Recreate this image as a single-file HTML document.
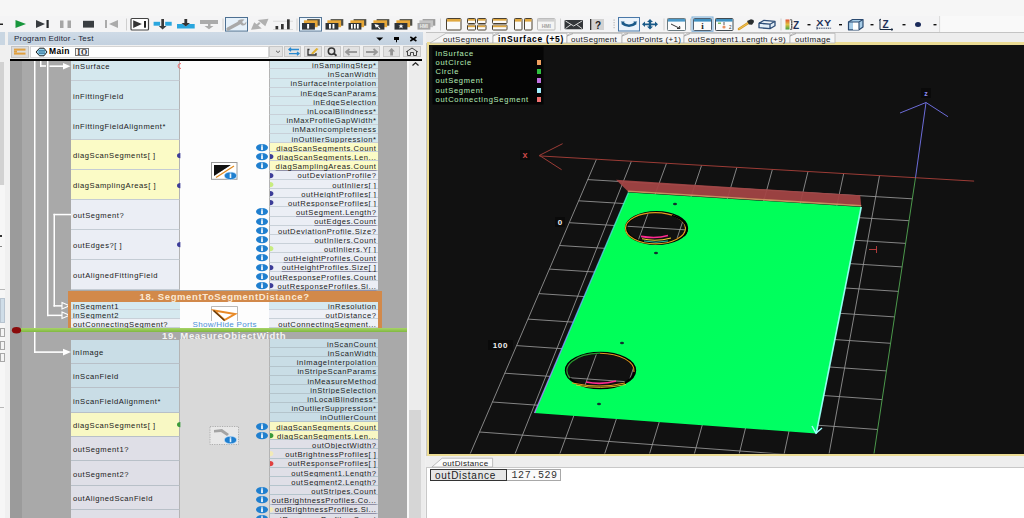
<!DOCTYPE html>
<html><head><meta charset="utf-8">
<style>
*{box-sizing:border-box;margin:0;padding:0}
html,body{width:1024px;height:518px;overflow:hidden;background:#f3f3f3;font-family:"Liberation Sans",sans-serif;font-size:8px;color:#222}
.a{position:absolute}
.t{position:absolute;white-space:nowrap;line-height:9px;letter-spacing:0.3px}
.p{font-size:7.6px;letter-spacing:0.55px;color:#1a1a1a}
.u{text-decoration:underline;text-decoration-color:#9090a8;text-decoration-thickness:0.6px;text-underline-offset:1px}
.rr{text-align:right}
svg{position:absolute;overflow:visible}
</style></head><body>

<div class="a" style="left:0px;top:0px;width:1024px;height:32px;background:#f6f6f6"></div>
<div class="a" style="left:941px;top:16px;width:83px;height:16px;background:#f9f9f9"></div>
<div class="a" style="left:0px;top:16px;width:940px;height:16px;background:#f4f4f5;border-right:1px solid #dcdcdc"></div>
<svg style="left:0;top:0" width="1024" height="34" viewBox="0 0 1024 34">
<rect x="0" y="23.5" width="3" height="1.5" fill="#222"/>
<path d="M15.5,20 L26,24 L15.5,28 Z" fill="#17963c"/>
<path d="M36,20 L45,24 L36,28 Z" fill="#383c40"/><rect x="46.5" y="20" width="2.2" height="8" fill="#25282b"/>
<rect x="60" y="20.5" width="3.5" height="7.5" fill="#a6a6a6"/><rect x="67.5" y="20.5" width="3.5" height="7.5" fill="#a6a6a6"/>
<rect x="83" y="20.8" width="11" height="6.8" fill="#3a3e42"/>
<rect x="105" y="20" width="2" height="8" fill="#ababab"/><path d="M118,20 L109,24 L118,28 Z" fill="#ababab"/>
<rect x="126" y="18.5" width="1" height="12" fill="#cfcfcf"/>
<rect x="131" y="18.5" width="17.5" height="11.5" rx="1" fill="#fff" stroke="#444" stroke-width="1.2"/>
<path d="M133.2,20.3 L141.9,24.1 L133.2,27.9 Z" fill="#353535"/><rect x="144" y="21" width="2" height="6.7" fill="#222"/>
<rect x="153.6" y="21.8" width="6.5" height="3.9" fill="#2aa6de"/><rect x="165.2" y="21.8" width="6.5" height="3.9" fill="#2aa6de"/>
<rect x="161.3" y="19" width="2.7" height="7.5" fill="#3a3a3a"/><path d="M158.8,26 L166.5,26 L162.6,29.6 Z" fill="#3a3a3a"/>
<path d="M177,24 L183,24 L185.8,26.5 L188.6,24 L194.7,24 L194.7,28.6 L177,28.6 Z" fill="#2aa6de"/>
<rect x="184.4" y="19" width="2.8" height="4.5" fill="#333"/><path d="M181.5,23 L190,23 L185.8,26.4 Z" fill="#333"/>
<rect x="200" y="20" width="18" height="4" fill="#ababab"/><rect x="208" y="23.5" width="2.5" height="3" fill="#ababab"/><path d="M204.5,26 L213.5,26 L209,29.2 Z" fill="#ababab"/>
<rect x="222.5" y="18.5" width="1" height="12" fill="#cfcfcf"/>
<rect x="225.5" y="17.5" width="22" height="13.6" fill="#e6f1fa" stroke="#4d7092" stroke-width="1"/>
<path d="M228,29 L240,22.5" stroke="#a9a9a9" stroke-width="3.2" stroke-linecap="round"/><path d="M237.5,21 Q240,18.5 244.5,19.5 L242,22 L244,24 L246.5,21.5 Q246.5,26 242,25.5 Z" fill="#a9a9a9"/>
<path d="M251,29.8 L254.2,22.2 L261.8,28.6 Z M268.5,18.8 L265.3,26.2 L257.7,20 Z" fill="#b0b0b0"/><path d="M256.5,25.8 L259.8,22.8" stroke="#b0b0b0" stroke-width="2"/>
<rect x="273" y="20.8" width="20" height="0.7" fill="#d0d0d0"/><rect x="273" y="29.3" width="20" height="0.7" fill="#d0d0d0"/>
<rect x="275.5" y="26" width="2.7" height="3.3" fill="#333"/><rect x="281" y="24" width="2.7" height="5.3" fill="#333"/><rect x="287" y="19.3" width="2.7" height="10" fill="#333"/>
<rect x="296.5" y="18.5" width="1" height="12" fill="#cfcfcf"/>
<rect x="299.5" y="17.5" width="22" height="13.6" fill="#ecf5fc" stroke="#557696" stroke-width="1"/>
<rect x="307.1" y="19.1" width="12.7" height="6.6" fill="#4e4e48"/>
<rect x="303.9" y="20.3" width="13.7" height="6.9" fill="#e8a838"/>
<rect x="302" y="23" width="12.9" height="6.6" fill="#303438"/>
<rect x="307.1" y="24" width="2" height="4.6" fill="#fff"/>
<rect x="330.6" y="19.1" width="12.7" height="6.6" fill="#4e4e48"/>
<rect x="327.4" y="20.3" width="13.7" height="6.9" fill="#e8a838"/>
<rect x="325.5" y="23" width="12.9" height="6.6" fill="#303438"/>
<rect x="329.0" y="24" width="1.9" height="4.6" fill="#fff"/><rect x="332.5" y="24" width="1.9" height="4.6" fill="#fff"/>
<rect x="353.6" y="19.1" width="12.7" height="6.6" fill="#4e4e48"/>
<rect x="350.4" y="20.3" width="13.7" height="6.9" fill="#e8a838"/>
<rect x="348.5" y="23" width="12.9" height="6.6" fill="#303438"/>
<rect x="351.0" y="24" width="1.7" height="4.6" fill="#fff"/>
<rect x="354.0" y="24" width="1.7" height="4.6" fill="#fff"/>
<rect x="357.0" y="24" width="1.7" height="4.6" fill="#fff"/>
<rect x="376.6" y="19.1" width="12.7" height="6.6" fill="#4e4e48"/>
<rect x="373.4" y="20.3" width="13.7" height="6.9" fill="#e8a838"/>
<rect x="371.5" y="23" width="12.9" height="6.6" fill="#303438"/>
<path d="M374.5,24 L379.5,25.3 L377.8,26 L380.5,28.6 L379.5,29.2 L377.0,26.6 L376.0,28 Z" fill="#fff"/>
<rect x="399.6" y="19.1" width="12.7" height="6.6" fill="#4e4e48"/>
<rect x="396.4" y="20.3" width="13.7" height="6.9" fill="#e8a838"/>
<rect x="394.5" y="23" width="12.9" height="6.6" fill="#303438"/>
<path d="M401.0,24 L401.8,25.6 L403.5,25.6 L402.1,26.6 L402.8,28.4 L401.0,27.3 L399.2,28.4 L399.9,26.6 L398.5,25.6 L400.2,25.6 Z" fill="#fff"/>
<rect x="422.6" y="19.1" width="12.7" height="6.6" fill="#9a9a9a"/>
<rect x="419.4" y="20.3" width="13.7" height="6.9" fill="#c4c4c4"/>
<rect x="417.5" y="23" width="12.9" height="6.6" fill="#a6a6a6"/>
<text x="423.9" y="28.3" font-size="4.5" fill="#eee" text-anchor="middle" font-family="Liberation Sans" font-weight="bold">HMI</text>
<rect x="440" y="18.5" width="1" height="12" fill="#cfcfcf"/>
<rect x="446.5" y="18.5" width="14.5" height="11.5" rx="0.8" fill="#fafafa" stroke="#4a4030" stroke-width="1"/>
<rect x="447.0" y="19.0" width="13.5" height="2.6" fill="#e0a840"/>
<rect x="467.5" y="18.5" width="8" height="5" rx="0.8" fill="#fafafa" stroke="#4a4030" stroke-width="1"/>
<rect x="468.0" y="19.0" width="7" height="1.7" fill="#e0a840"/>
<rect x="477.5" y="18.5" width="8.5" height="5" rx="0.8" fill="#fafafa" stroke="#4a4030" stroke-width="1"/>
<rect x="478.0" y="19.0" width="7.5" height="1.7" fill="#e0a840"/>
<rect x="467.5" y="25" width="8" height="5" rx="0.8" fill="#fafafa" stroke="#4a4030" stroke-width="1"/>
<rect x="468.0" y="25.5" width="7" height="1.7" fill="#e0a840"/>
<rect x="477.5" y="25" width="8.5" height="5" rx="0.8" fill="#fafafa" stroke="#4a4030" stroke-width="1"/>
<rect x="478.0" y="25.5" width="7.5" height="1.7" fill="#e0a840"/>
<rect x="492.5" y="18.5" width="14.5" height="5" rx="0.8" fill="#fafafa" stroke="#4a4030" stroke-width="1"/>
<rect x="493.0" y="19.0" width="13.5" height="1.7" fill="#e0a840"/>
<rect x="492.5" y="25" width="14.5" height="5" rx="0.8" fill="#fafafa" stroke="#4a4030" stroke-width="1"/>
<rect x="493.0" y="25.5" width="13.5" height="1.7" fill="#e0a840"/>
<rect x="514.5" y="18.5" width="7.5" height="11.5" rx="0.8" fill="#fafafa" stroke="#4a4030" stroke-width="1"/>
<rect x="515.0" y="19.0" width="6.5" height="2.6" fill="#e0a840"/>
<rect x="524.5" y="18.5" width="7.5" height="11.5" rx="0.8" fill="#fafafa" stroke="#4a4030" stroke-width="1"/>
<rect x="525.0" y="19.0" width="6.5" height="2.6" fill="#e0a840"/>
<rect x="537.5" y="18.5" width="17.5" height="11.5" rx="0.8" fill="#f4f4f4" stroke="#bdbdbd" stroke-width="1"/>
<rect x="538.0" y="19.0" width="16.5" height="2.6" fill="#cfcfcf"/>
<text x="546.3" y="28.3" font-size="5" fill="#a0a0a0" text-anchor="middle" font-family="Liberation Sans" font-weight="bold">HMI</text>
<rect x="560" y="18.5" width="1" height="12" fill="#cfcfcf"/>
<rect x="564.5" y="20" width="18.5" height="9.2" rx="1" fill="#333639"/><path d="M565.5,21 L573.7,26 L582,21 M565.5,28.5 L571,24.5 M582,28.5 L576.5,24.5" stroke="#e8e8e8" stroke-width="0.9" fill="none"/>
<rect x="590" y="19" width="14" height="11" fill="#d2d2d2"/><rect x="590" y="19" width="1.3" height="11" fill="#333"/><text x="598" y="28.8" font-size="10" fill="#222" text-anchor="middle" font-family="Liberation Sans" font-weight="bold">?</text>
<rect x="613.5" y="19.5" width="1.2" height="1.2" fill="#b8b8b8"/>
<rect x="613.5" y="22" width="1.2" height="1.2" fill="#b8b8b8"/>
<rect x="613.5" y="24.5" width="1.2" height="1.2" fill="#b8b8b8"/>
<rect x="613.5" y="27" width="1.2" height="1.2" fill="#b8b8b8"/>
<rect x="618.5" y="17.5" width="21" height="13.5" fill="#eaf3fb" stroke="#4a78a8" stroke-width="1"/>
<path d="M622,23 Q629,28.5 636,23" stroke="#1a5a8a" stroke-width="2.6" fill="none"/><path d="M620.8,21.5 L624.5,21.5 L623.5,25.5 Z M637.2,21.5 L633.5,21.5 L634.5,25.5 Z" fill="#1a5a8a"/>
<path d="M650,19 L653,22 L651.2,22 L651.2,23.4 L655,23.4 L655,21.6 L658,24.3 L655,27 L655,25.2 L651.2,25.2 L651.2,26.6 L653,26.6 L650,29.6 L647,26.6 L648.8,26.6 L648.8,25.2 L645,25.2 L645,27 L642,24.3 L645,21.6 L645,23.4 L648.8,23.4 L648.8,22 L647,22 Z" fill="#1a5a88"/>
<rect x="663.5" y="18.5" width="1" height="12" fill="#cfcfcf"/>
<rect x="667.5" y="18.5" width="18" height="12" rx="0.8" fill="#fbfbfb" stroke="#6a7a80" stroke-width="1"/>
<rect x="668.0" y="19.0" width="17" height="2.6" fill="#4a98c8"/>
<path d="M671,24 L680,28.5 M680,28.5 L677,28.5 M680,28.5 L679.5,26" stroke="#333" stroke-width="1" fill="none"/>
<rect x="690" y="18.5" width="1" height="12" fill="#cfcfcf"/>
<rect x="692" y="17" width="21" height="14.3" fill="#dfeefa" stroke="#7fb0d8" stroke-width="1"/>
<rect x="693.5" y="18.5" width="18" height="12" rx="0.8" fill="#fbfbfb" stroke="#506070" stroke-width="1"/>
<rect x="694.0" y="19.0" width="17" height="2.6" fill="#3e90c0"/>
<text x="702.5" y="29" font-size="9" fill="#222" text-anchor="middle" font-family="Liberation Serif" font-weight="bold">i</text>
<rect x="715.5" y="18.5" width="17.5" height="12" rx="0.8" fill="#fbfbfb" stroke="#404a50" stroke-width="1"/>
<rect x="716.0" y="19.0" width="16.5" height="2.6" fill="#3e90c0"/>
<rect x="718" y="22.5" width="3" height="1.5" fill="#7ac060"/><circle cx="724" cy="27" r="1.6" fill="#e89060"/><rect x="723.6" y="22" width="0.8" height="3" fill="#333"/><text x="729" y="29" font-size="4.5" fill="#333" font-family="Liberation Sans">2</text>
<path d="M739,29 L749,22.5" stroke="#d89a28" stroke-width="2.6" stroke-linecap="round"/><path d="M739,29 L749,22.5" stroke="#f0d060" stroke-width="0.8"/><path d="M747,21 L751,19.3 L753.5,20 L754,22 L752,24.8 L749,24.5 Z" fill="#2a2e30"/>
<path d="M759,23.2 L764,20.3 L775,21.3 L775,25.7 L770,28.7 L759,27.7 Z M759,23.2 L770,24.2 L775,21.3 M770,24.2 L770,28.7" stroke="#2e4e78" stroke-width="1.3" fill="#e2eef8" stroke-linejoin="round"/>
<rect x="780.5" y="18.5" width="1" height="12" fill="#cfcfcf"/>
<defs><linearGradient id="zb" x1="0" y1="0" x2="0" y2="1"><stop offset="0" stop-color="#e05030"/><stop offset="0.5" stop-color="#e0c040"/><stop offset="1" stop-color="#40a040"/></linearGradient></defs>
<rect x="785.5" y="19.5" width="4" height="10" fill="url(#zb)"/><path d="M790,19.8 L791.8,19.8 L791.8,29.3 L790,29.3 M791,22 L792.3,22 M791,24.5 L792.3,24.5 M791,27 L792.3,27" stroke="#333" stroke-width="0.8" fill="none"/>
<text x="793" y="28.5" font-size="10" fill="#1e3058" font-family="Liberation Sans" font-weight="bold">Z</text>
<rect x="807.5" y="24" width="3" height="1.4" fill="#111"/>
<text x="816.3" y="25.6" font-size="8.6" fill="#1e3058" font-family="Liberation Sans" font-weight="bold" letter-spacing="0.3" textLength="15.2" lengthAdjust="spacingAndGlyphs">XY</text><path d="M817,28.2 L831.5,28.2" stroke="#1e3058" stroke-width="0.9" stroke-dasharray="1.2,0.6"/><rect x="816.5" y="26.5" width="0.9" height="3" fill="#253a60"/>
<rect x="839" y="24" width="3" height="1.4" fill="#111"/>
<path d="M848.5,22 L852.5,19.5 L863,19.5 L863,27 L859,29.8 L848.5,29.8 Z" fill="#a8cde8" stroke="#2a4a70" stroke-width="1.2" stroke-linejoin="round"/><path d="M853,22 L859,22 L859,29.8 L853,29.8 Z" fill="#fff"/><path d="M848.5,22 L859,22 L863,19.5 M859,22 L859,29.8" stroke="#2a4a70" stroke-width="1.1" fill="none"/>
<rect x="870.5" y="24" width="3" height="1.4" fill="#111"/>
<path d="M880,19.5 L880,29.5 L892.5,29.5 M879,20.5 L881,19 M891.5,28.5 L893,29.5 L891.5,30.5" stroke="#1a2a40" stroke-width="1" fill="none"/><text x="882.5" y="28" font-size="10" fill="#1e3058" font-family="Liberation Sans" font-weight="bold">Z</text>
<rect x="902.5" y="24" width="3" height="1.4" fill="#111"/>
<ellipse cx="918" cy="24.6" rx="3" ry="2.5" fill="#1a2a5a"/>
<rect x="933.5" y="24" width="3" height="1.4" fill="#111"/>
</svg>
<div class="a" style="left:0px;top:32px;width:427px;height:486px;background:#f0f0f0"></div>
<div class="a" style="left:0px;top:32px;width:5px;height:13px;background:#c9d6e2"></div>
<div class="a" style="left:0px;top:62px;width:4px;height:123px;background:#d2d2d2"></div>
<div class="a" style="left:0px;top:185px;width:5px;height:333px;background:#f6f6f6"></div>
<div class="a" style="left:0px;top:289px;width:5px;height:1px;background:#b8b8b8"></div>
<div class="a" style="left:0px;top:407px;width:4px;height:1px;background:#b8b8b8"></div>
<div class="a" style="left:0px;top:235px;width:1.5px;height:1.5px;background:#333"></div>
<div class="a" style="left:0px;top:246px;width:1.5px;height:1px;background:#888"></div>
<div class="a" style="left:0px;top:298px;width:5px;height:25px;background:#cfdde8;border:1px solid #b8c4d0"></div>
<div class="a" style="left:0px;top:328px;width:5px;height:9px;background:#f4f4f4;border:1px solid #a8a8a8"></div>
<div class="a" style="left:0px;top:341px;width:5px;height:9px;background:#f4f4f4;border:1px solid #a8a8a8"></div>
<div class="a" style="left:0px;top:353px;width:5px;height:9px;background:#f4f4f4;border:1px solid #a8a8a8"></div>
<div class="a" style="left:8px;top:32px;width:415px;height:13px;background:linear-gradient(#cfdbe7,#c3d1df)"></div>
<div class="t" style="left:14px;top:34px;color:#1c2636;font-size:8px;letter-spacing:0.2px">Program Editor - Test</div>
<div class="a" style="left:11px;top:46px;width:18px;height:12px;background:#dcdcdc;border:1px solid #c4c4c4"></div>
<div class="a" style="left:30px;top:46px;width:239px;height:12px;background:#fff;border:1px solid #d4d4d4"></div>
<div class="t" style="left:49px;top:47px;color:#000;font-size:8.5px;letter-spacing:0.4px"><b>Main</b></div>
<div class="a" style="left:75px;top:48px;width:13.5px;height:8px;border:1px solid #777;background:#f4f4f4"></div>
<div class="t" style="left:77.3px;top:47.5px;color:#333;font-size:8px;letter-spacing:0.6px;font-family:&#39;Liberation Serif&#39;,serif"><b>IO</b></div>
<svg style="left:0;top:0" width="1024" height="62" viewBox="0 0 1024 62">
<path d="M376.2,37.6 L383.2,37.6 L379.7,40.8 Z" fill="#000"/>
<path d="M394,37 L399,37 L399,40 L397,40 L397,42.3 L396,42.3 L396,40 L394,40 Z M395,37.5 L395,39.5" fill="#000"/>
<path d="M410.3,37 L416.4,41 M416.4,37 L410.3,41" stroke="#000" stroke-width="1.5"/>
</svg>
<div class="a" style="left:269px;top:46px;width:14px;height:11px;background:#e2e2e2;border:1px solid #c8c8c8"></div>
<div class="a" style="left:284px;top:46px;width:17px;height:11px;background:#e2e2e2;border:1px solid #c8c8c8"></div>
<div class="a" style="left:304px;top:46px;width:18px;height:11px;background:#e2e2e2;border:1px solid #c8c8c8"></div>
<div class="a" style="left:324px;top:46px;width:17px;height:11px;background:#e2e2e2;border:1px solid #c8c8c8"></div>
<div class="a" style="left:343px;top:46px;width:17px;height:11px;background:#e2e2e2;border:1px solid #c8c8c8"></div>
<div class="a" style="left:363px;top:46px;width:17px;height:11px;background:#e2e2e2;border:1px solid #c8c8c8"></div>
<div class="a" style="left:383px;top:46px;width:17px;height:11px;background:#e2e2e2;border:1px solid #c8c8c8"></div>
<div class="a" style="left:403px;top:46px;width:18px;height:11px;background:#e2e2e2;border:1px solid #c8c8c8"></div>
<div class="a" style="left:10px;top:59px;width:412px;height:2px;background:#000"></div>
<svg style="left:0;top:0" width="1024" height="62" viewBox="0 0 1024 62">
<rect x="14" y="48.6" width="11.5" height="2" fill="#e0a040"/><rect x="14" y="52.6" width="11.5" height="2" fill="#e0a040"/><rect x="14" y="50.6" width="3" height="2" fill="#e0a040"/>
<path d="M36,52 L39.5,48.2 L44,48.2 L47,52 L44,55.8 L39.5,55.8 Z" fill="#9fd8f0" stroke="#222" stroke-width="1"/><rect x="38.5" y="50.3" width="6.5" height="1.2" fill="#2a6a90"/><rect x="38.5" y="52.5" width="6.5" height="1.2" fill="#2a6a90"/>
<path d="M276,50.8 L278,52.6 L280,50.8" stroke="#555" stroke-width="0.9" fill="none"/>
<path d="M289,49.5 L299,49.5 M291,47.8 L289,49.5 L291,51.2" stroke="#2a8ad0" stroke-width="1.3" fill="none"/><path d="M289,53.6 L299,53.6 M297,51.9 L299,53.6 L297,55.3" stroke="#2a8ad0" stroke-width="1.3" fill="none"/>
<path d="M309.5,49.5 L308,49.5 L308,55 L316,55 L316,53" stroke="#333" stroke-width="1.3" fill="none"/><path d="M311,53.5 L316.5,48 L318.5,49 L313,54.3 Z" fill="#e0b030"/>
<circle cx="331.5" cy="51.2" r="3.2" stroke="#333" stroke-width="1.5" fill="none"/><path d="M334,53.5 L336.5,55.7" stroke="#333" stroke-width="1.8"/>
<path d="M346,52 L357,52 M349.5,49 L346,52 L349.5,55" stroke="#999" stroke-width="1.8" fill="none"/>
<path d="M366,52 L377,52 M373.5,49 L377,52 L373.5,55" stroke="#999" stroke-width="1.8" fill="none"/>
<path d="M391.6,48 L395,51.5 L393,51.5 L393,55.5 L390.2,55.5 L390.2,51.5 L388.2,51.5 Z" fill="#959595"/>
<path d="M406,52 L412,48 L418,52 M407.5,51 L407.5,55.5 L410.5,55.5 L410.5,52.5 L413.5,52.5 L413.5,55.5 L416.5,55.5 L416.5,51" stroke="#333" stroke-width="0.9" fill="none"/>
</svg>
<div class="a" style="left:10px;top:61px;width:397px;height:457px;background:#a9a9a9"></div>
<div class="a" style="left:10px;top:61px;width:12px;height:457px;background:#9b9b9b"></div>
<div class="a" style="left:407px;top:61px;width:2px;height:457px;background:#f8f8f8"></div>
<div class="a" style="left:409px;top:61px;width:16px;height:457px;background:#ececec"></div>
<div class="a" style="left:409px;top:410px;width:12px;height:108px;background:#d6d6d6"></div>
<svg style="left:409px;top:60px" width="14" height="8" viewBox="0 0 14 8"><path d="M3.5,5.5 L6.5,2.8 L9.5,5.5" stroke="#222" stroke-width="1.2" fill="none"/></svg>
<svg style="left:0;top:0" width="1024" height="518" viewBox="0 0 1024 518">
<g fill="#ffffff">
<rect x="34" y="61" width="1.5" height="292"/><rect x="34" y="351.3" width="30" height="1.6"/><path d="M63,348.8 L71,352.1 L63,355.4 Z"/>
<rect x="47" y="61" width="1.5" height="255.2"/><rect x="47" y="314.6" width="15" height="1.5"/>
<rect x="53.5" y="213.8" width="1.5" height="92.8"/><rect x="53.5" y="213.8" width="17.5" height="1.5"/><rect x="53.5" y="305.1" width="8.5" height="1.5"/>
<rect x="40" y="61" width="1.5" height="5.8"/><rect x="40" y="65.2" width="6" height="1.6"/>
<rect x="49.5" y="65.4" width="14" height="1.6"/><path d="M63,63 L70.5,66.2 L63,69.4 Z"/>
</g>
<path d="M62,302.6 L69.5,305.8 L62,309 Z M62,312.1 L69.5,315.3 L62,318.5 Z" fill="none" stroke="#fff" stroke-width="1.1"/>
</svg>
<div class="a" style="left:70.5px;top:61px;width:1.5px;height:229px;background:#8e8e8e"></div>
<div class="a" style="left:71px;top:61px;width:109px;height:19.5px;background:#d5e8ee;border-bottom:1px solid #c4ccd4;border-right:1px solid #b4b4b4"></div>
<div class="t p" style="left:73px;top:61.75px">inSurface</div>
<div class="a" style="left:71px;top:80.5px;width:109px;height:29.9px;background:#d5e8ee;border-bottom:1px solid #c4ccd4;border-right:1px solid #b4b4b4"></div>
<div class="t p" style="left:73px;top:91.65px">inFittingField</div>
<div class="a" style="left:71px;top:110.4px;width:109px;height:29.9px;background:#d5e8ee;border-bottom:1px solid #c4ccd4;border-right:1px solid #b4b4b4"></div>
<div class="t p" style="left:73px;top:121.55px">inFittingFieldAlignment*</div>
<div class="a" style="left:71px;top:140.3px;width:109px;height:29.9px;background:#fbfbc6;border-bottom:1px solid #c4ccd4;border-right:1px solid #b4b4b4"></div>
<div class="t p" style="left:73px;top:151.45px">diagScanSegments[ ]</div>
<div class="a" style="left:71px;top:170.2px;width:109px;height:29.9px;background:#fbfbc6;border-bottom:1px solid #c4ccd4;border-right:1px solid #b4b4b4"></div>
<div class="t p" style="left:73px;top:181.35px">diagSamplingAreas[ ]</div>
<div class="a" style="left:71px;top:200.1px;width:109px;height:29.9px;background:#ebeef5;border-bottom:1px solid #c4ccd4;border-right:1px solid #b4b4b4"></div>
<div class="t p" style="left:73px;top:211.25px">outSegment?</div>
<div class="a" style="left:71px;top:230.0px;width:109px;height:29.9px;background:#ebeef5;border-bottom:1px solid #c4ccd4;border-right:1px solid #b4b4b4"></div>
<div class="t p" style="left:73px;top:241.15px">outEdges?[ ]</div>
<div class="a" style="left:71px;top:259.9px;width:109px;height:29.9px;background:#ebeef5;border-bottom:1px solid #c4ccd4;border-right:1px solid #b4b4b4"></div>
<div class="t p" style="left:73px;top:271.05px">outAlignedFittingField</div>
<div class="a" style="left:180px;top:61px;width:89px;height:229px;background:#fdfdfd"></div>
<div class="a" style="left:269px;top:61px;width:109px;height:8.4px;background:#d5e8ee;border-bottom:1px solid #c8d0d8;border-left:1px solid #b4b4b4"></div>
<div class="t rr p" style="top:61.0px;width:106.5px;left:270px">inSamplingStep*</div>
<div class="a" style="left:269px;top:69.4px;width:109px;height:9.2px;background:#d5e8ee;border-bottom:1px solid #c8d0d8;border-left:1px solid #b4b4b4"></div>
<div class="t rr p" style="top:70.2px;width:106.5px;left:270px">inScanWidth</div>
<div class="a" style="left:269px;top:78.6px;width:109px;height:9.2px;background:#d5e8ee;border-bottom:1px solid #c8d0d8;border-left:1px solid #b4b4b4"></div>
<div class="t rr p" style="top:79.4px;width:106.5px;left:270px">inSurfaceInterpolation</div>
<div class="a" style="left:269px;top:87.8px;width:109px;height:9.2px;background:#d5e8ee;border-bottom:1px solid #c8d0d8;border-left:1px solid #b4b4b4"></div>
<div class="t rr p" style="top:88.6px;width:106.5px;left:270px">inEdgeScanParams</div>
<div class="a" style="left:269px;top:97.0px;width:109px;height:9.2px;background:#d5e8ee;border-bottom:1px solid #c8d0d8;border-left:1px solid #b4b4b4"></div>
<div class="t rr p" style="top:97.8px;width:106.5px;left:270px">inEdgeSelection</div>
<div class="a" style="left:269px;top:106.2px;width:109px;height:9.2px;background:#d5e8ee;border-bottom:1px solid #c8d0d8;border-left:1px solid #b4b4b4"></div>
<div class="t rr p" style="top:107.0px;width:106.5px;left:270px">inLocalBlindness*</div>
<div class="a" style="left:269px;top:115.4px;width:109px;height:9.2px;background:#d5e8ee;border-bottom:1px solid #c8d0d8;border-left:1px solid #b4b4b4"></div>
<div class="t rr p" style="top:116.2px;width:106.5px;left:270px">inMaxProfileGapWidth*</div>
<div class="a" style="left:269px;top:124.6px;width:109px;height:9.2px;background:#d5e8ee;border-bottom:1px solid #c8d0d8;border-left:1px solid #b4b4b4"></div>
<div class="t rr p" style="top:125.4px;width:106.5px;left:270px">inMaxIncompleteness</div>
<div class="a" style="left:269px;top:133.8px;width:109px;height:9.2px;background:#d5e8ee;border-bottom:1px solid #c8d0d8;border-left:1px solid #b4b4b4"></div>
<div class="t rr p" style="top:134.6px;width:106.5px;left:270px">inOutlierSuppression*</div>
<div class="a" style="left:269px;top:143.0px;width:109px;height:9.2px;background:#fbfbc6;border-bottom:1px solid #c8d0d8;border-left:1px solid #b4b4b4"></div>
<div class="t rr p u" style="top:143.8px;width:106.5px;left:270px">diagScanSegments.Count</div>
<div class="a" style="left:269px;top:152.2px;width:109px;height:9.2px;background:#fbfbc6;border-bottom:1px solid #c8d0d8;border-left:1px solid #b4b4b4"></div>
<div class="t rr p u" style="top:153.0px;width:106.5px;left:270px">diagScanSegments.Len...</div>
<div class="a" style="left:269px;top:161.4px;width:109px;height:9.2px;background:#fbfbc6;border-bottom:1px solid #c8d0d8;border-left:1px solid #b4b4b4"></div>
<div class="t rr p u" style="top:162.2px;width:106.5px;left:270px">diagSamplingAreas.Count</div>
<div class="a" style="left:269px;top:170.6px;width:109px;height:9.2px;background:#ebeef5;border-bottom:1px solid #c8d0d8;border-left:1px solid #b4b4b4"></div>
<div class="t rr p" style="top:171.4px;width:106.5px;left:270px">outDeviationProfile?</div>
<div class="a" style="left:269px;top:179.8px;width:109px;height:9.2px;background:#ebeef5;border-bottom:1px solid #c8d0d8;border-left:1px solid #b4b4b4"></div>
<div class="t rr p" style="top:180.6px;width:106.5px;left:270px">outInliers[ ]</div>
<div class="a" style="left:269px;top:189.0px;width:109px;height:9.2px;background:#ebeef5;border-bottom:1px solid #c8d0d8;border-left:1px solid #b4b4b4"></div>
<div class="t rr p" style="top:189.8px;width:106.5px;left:270px">outHeightProfiles[ ]</div>
<div class="a" style="left:269px;top:198.2px;width:109px;height:9.2px;background:#ebeef5;border-bottom:1px solid #c8d0d8;border-left:1px solid #b4b4b4"></div>
<div class="t rr p" style="top:199.0px;width:106.5px;left:270px">outResponseProfiles[ ]</div>
<div class="a" style="left:269px;top:207.4px;width:109px;height:9.2px;background:#ebeef5;border-bottom:1px solid #c8d0d8;border-left:1px solid #b4b4b4"></div>
<div class="t rr p u" style="top:208.2px;width:106.5px;left:270px">outSegment.Length?</div>
<div class="a" style="left:269px;top:216.6px;width:109px;height:9.2px;background:#ebeef5;border-bottom:1px solid #c8d0d8;border-left:1px solid #b4b4b4"></div>
<div class="t rr p u" style="top:217.4px;width:106.5px;left:270px">outEdges.Count</div>
<div class="a" style="left:269px;top:225.8px;width:109px;height:9.2px;background:#ebeef5;border-bottom:1px solid #c8d0d8;border-left:1px solid #b4b4b4"></div>
<div class="t rr p u" style="top:226.6px;width:106.5px;left:270px">outDeviationProfile.Size?</div>
<div class="a" style="left:269px;top:235.0px;width:109px;height:9.2px;background:#ebeef5;border-bottom:1px solid #c8d0d8;border-left:1px solid #b4b4b4"></div>
<div class="t rr p u" style="top:235.8px;width:106.5px;left:270px">outInliers.Count</div>
<div class="a" style="left:269px;top:244.2px;width:109px;height:9.2px;background:#ebeef5;border-bottom:1px solid #c8d0d8;border-left:1px solid #b4b4b4"></div>
<div class="t rr p u" style="top:245.0px;width:106.5px;left:270px">outInliers.Y[ ]</div>
<div class="a" style="left:269px;top:253.4px;width:109px;height:9.2px;background:#ebeef5;border-bottom:1px solid #c8d0d8;border-left:1px solid #b4b4b4"></div>
<div class="t rr p u" style="top:254.2px;width:106.5px;left:270px">outHeightProfiles.Count</div>
<div class="a" style="left:269px;top:262.6px;width:109px;height:9.2px;background:#ebeef5;border-bottom:1px solid #c8d0d8;border-left:1px solid #b4b4b4"></div>
<div class="t rr p u" style="top:263.4px;width:106.5px;left:270px">outHeightProfiles.Size[ ]</div>
<div class="a" style="left:269px;top:271.8px;width:109px;height:9.2px;background:#ebeef5;border-bottom:1px solid #c8d0d8;border-left:1px solid #b4b4b4"></div>
<div class="t rr p u" style="top:272.6px;width:106.5px;left:270px">outResponseProfiles.Count</div>
<div class="a" style="left:269px;top:281.0px;width:109px;height:9.2px;background:#ebeef5;border-bottom:1px solid #c8d0d8;border-left:1px solid #b4b4b4"></div>
<div class="t rr p u" style="top:281.8px;width:106.5px;left:270px">outResponseProfiles.Si...</div>
<div class="a" style="left:68px;top:291px;width:314px;height:38px;background:#d2894a"></div>
<div class="t" style="left:139.5px;top:292px;color:#fbe8d2;font-size:9.5px;letter-spacing:0.61px"><b>18. SegmentToSegmentDistance?</b></div>
<div class="a" style="left:71px;top:301.6px;width:109px;height:8.85px;background:#d6e9ef;border-bottom:1px solid #c8d0d8"></div>
<div class="t p" style="left:73px;top:302.2px">inSegment1</div>
<div class="a" style="left:71px;top:310.45px;width:109px;height:8.85px;background:#d6e9ef;border-bottom:1px solid #c8d0d8"></div>
<div class="t p" style="left:73px;top:311.05px">inSegment2</div>
<div class="a" style="left:71px;top:319.3px;width:109px;height:8.85px;background:#eef0f6;border-bottom:1px solid #c8d0d8"></div>
<div class="t p" style="left:73px;top:319.9px">outConnectingSegment?</div>
<div class="a" style="left:180px;top:301.6px;width:89px;height:26.5px;background:#fdfdfd"></div>
<div class="a" style="left:269px;top:301.6px;width:109px;height:8.85px;background:#d6e9ef;border-bottom:1px solid #c8d0d8"></div>
<div class="t rr p" style="top:302.2px;left:270px;width:106.5px">inResolution</div>
<div class="a" style="left:269px;top:310.45px;width:109px;height:8.85px;background:#eef0f6;border-bottom:1px solid #c8d0d8"></div>
<div class="t rr p" style="top:311.05px;left:270px;width:106.5px">outDistance?</div>
<div class="a" style="left:269px;top:319.3px;width:109px;height:8.85px;background:#eef0f6;border-bottom:1px solid #c8d0d8"></div>
<div class="t rr p" style="top:319.9px;left:270px;width:106.5px">outConnectingSegment...</div>
<div class="t" style="left:192.5px;top:319.8px;color:#4a90d8;letter-spacing:0.32px;-webkit-text-stroke:0">Show/Hide Ports</div>
<div class="a" style="left:21px;top:328px;width:386px;height:4px;background:linear-gradient(#a8d468,#80b840)"></div>
<div class="t" style="left:162px;top:331px;color:#f4f4f4;font-size:9.5px;letter-spacing:0.63px"><b>19. MeasureObjectWidth</b></div>
<div class="a" style="left:71px;top:339.5px;width:109px;height:24.35px;background:#c9dde6;border-bottom:1px solid #b8c0c8;border-right:1px solid #b4b4b4"></div>
<div class="t p" style="left:73px;top:347.88px">inImage</div>
<div class="a" style="left:71px;top:363.85px;width:109px;height:24.35px;background:#c9dde6;border-bottom:1px solid #b8c0c8;border-right:1px solid #b4b4b4"></div>
<div class="t p" style="left:73px;top:372.23px">inScanField</div>
<div class="a" style="left:71px;top:388.2px;width:109px;height:24.35px;background:#c9dde6;border-bottom:1px solid #b8c0c8;border-right:1px solid #b4b4b4"></div>
<div class="t p" style="left:73px;top:396.57px">inScanFieldAlignment*</div>
<div class="a" style="left:71px;top:412.55px;width:109px;height:24.35px;background:#f8f8c4;border-bottom:1px solid #b8c0c8;border-right:1px solid #b4b4b4"></div>
<div class="t p" style="left:73px;top:420.93px">diagScanSegments[ ]</div>
<div class="a" style="left:71px;top:436.9px;width:109px;height:24.35px;background:#dfdfe7;border-bottom:1px solid #b8c0c8;border-right:1px solid #b4b4b4"></div>
<div class="t p" style="left:73px;top:445.27px">outSegment1?</div>
<div class="a" style="left:71px;top:461.25px;width:109px;height:24.35px;background:#dfdfe7;border-bottom:1px solid #b8c0c8;border-right:1px solid #b4b4b4"></div>
<div class="t p" style="left:73px;top:469.62px">outSegment2?</div>
<div class="a" style="left:71px;top:485.6px;width:109px;height:24.35px;background:#dfdfe7;border-bottom:1px solid #b8c0c8;border-right:1px solid #b4b4b4"></div>
<div class="t p" style="left:73px;top:493.98px">outAlignedScanField</div>
<div class="a" style="left:71px;top:509.95px;width:109px;height:24.35px;background:#dfdfe7;border-bottom:1px solid #b8c0c8;border-right:1px solid #b4b4b4"></div>
<div class="a" style="left:180px;top:339px;width:89px;height:179px;background:#d9d9d9"></div>
<div class="a" style="left:269px;top:339.0px;width:109px;height:9.2px;background:#c9dde6;border-bottom:1px solid #b4c4cc;border-left:1px solid #b4b4b4"></div>
<div class="t rr p" style="top:339.8px;width:106.5px;left:270px">inScanCount</div>
<div class="a" style="left:269px;top:348.2px;width:109px;height:9.2px;background:#c9dde6;border-bottom:1px solid #b4c4cc;border-left:1px solid #b4b4b4"></div>
<div class="t rr p" style="top:349.0px;width:106.5px;left:270px">inScanWidth</div>
<div class="a" style="left:269px;top:357.4px;width:109px;height:9.2px;background:#c9dde6;border-bottom:1px solid #b4c4cc;border-left:1px solid #b4b4b4"></div>
<div class="t rr p" style="top:358.2px;width:106.5px;left:270px">inImageInterpolation</div>
<div class="a" style="left:269px;top:366.6px;width:109px;height:9.2px;background:#c9dde6;border-bottom:1px solid #b4c4cc;border-left:1px solid #b4b4b4"></div>
<div class="t rr p" style="top:367.4px;width:106.5px;left:270px">inStripeScanParams</div>
<div class="a" style="left:269px;top:375.8px;width:109px;height:9.2px;background:#c9dde6;border-bottom:1px solid #b4c4cc;border-left:1px solid #b4b4b4"></div>
<div class="t rr p" style="top:376.6px;width:106.5px;left:270px">inMeasureMethod</div>
<div class="a" style="left:269px;top:385.0px;width:109px;height:9.2px;background:#c9dde6;border-bottom:1px solid #b4c4cc;border-left:1px solid #b4b4b4"></div>
<div class="t rr p" style="top:385.8px;width:106.5px;left:270px">inStripeSelection</div>
<div class="a" style="left:269px;top:394.2px;width:109px;height:9.2px;background:#c9dde6;border-bottom:1px solid #b4c4cc;border-left:1px solid #b4b4b4"></div>
<div class="t rr p" style="top:395.0px;width:106.5px;left:270px">inLocalBlindness*</div>
<div class="a" style="left:269px;top:403.4px;width:109px;height:9.2px;background:#c9dde6;border-bottom:1px solid #b4c4cc;border-left:1px solid #b4b4b4"></div>
<div class="t rr p" style="top:404.2px;width:106.5px;left:270px">inOutlierSuppression*</div>
<div class="a" style="left:269px;top:412.6px;width:109px;height:9.2px;background:#c9dde6;border-bottom:1px solid #b4c4cc;border-left:1px solid #b4b4b4"></div>
<div class="t rr p" style="top:413.4px;width:106.5px;left:270px">inOutlierCount</div>
<div class="a" style="left:269px;top:421.8px;width:109px;height:9.2px;background:#f8f8c4;border-bottom:1px solid #b4c4cc;border-left:1px solid #b4b4b4"></div>
<div class="t rr p u" style="top:422.6px;width:106.5px;left:270px">diagScanSegments.Count</div>
<div class="a" style="left:269px;top:431.0px;width:109px;height:9.2px;background:#f8f8c4;border-bottom:1px solid #b4c4cc;border-left:1px solid #b4b4b4"></div>
<div class="t rr p u" style="top:431.8px;width:106.5px;left:270px">diagScanSegments.Len...</div>
<div class="a" style="left:269px;top:440.2px;width:109px;height:9.2px;background:#dfdfe7;border-bottom:1px solid #b4c4cc;border-left:1px solid #b4b4b4"></div>
<div class="t rr p" style="top:441.0px;width:106.5px;left:270px">outObjectWidth?</div>
<div class="a" style="left:269px;top:449.4px;width:109px;height:9.2px;background:#dfdfe7;border-bottom:1px solid #b4c4cc;border-left:1px solid #b4b4b4"></div>
<div class="t rr p" style="top:450.2px;width:106.5px;left:270px">outBrightnessProfiles[ ]</div>
<div class="a" style="left:269px;top:458.6px;width:109px;height:9.2px;background:#dfdfe7;border-bottom:1px solid #b4c4cc;border-left:1px solid #b4b4b4"></div>
<div class="t rr p" style="top:459.4px;width:106.5px;left:270px">outResponseProfiles[ ]</div>
<div class="a" style="left:269px;top:467.8px;width:109px;height:9.2px;background:#dfdfe7;border-bottom:1px solid #b4c4cc;border-left:1px solid #b4b4b4"></div>
<div class="t rr p" style="top:468.6px;width:106.5px;left:270px">outSegment1.Length?</div>
<div class="a" style="left:269px;top:477.0px;width:109px;height:9.2px;background:#dfdfe7;border-bottom:1px solid #b4c4cc;border-left:1px solid #b4b4b4"></div>
<div class="t rr p" style="top:477.8px;width:106.5px;left:270px">outSegment2.Length?</div>
<div class="a" style="left:269px;top:486.2px;width:109px;height:9.2px;background:#dfdfe7;border-bottom:1px solid #b4c4cc;border-left:1px solid #b4b4b4"></div>
<div class="t rr p u" style="top:487.0px;width:106.5px;left:270px">outStripes.Count</div>
<div class="a" style="left:269px;top:495.4px;width:109px;height:9.2px;background:#dfdfe7;border-bottom:1px solid #b4c4cc;border-left:1px solid #b4b4b4"></div>
<div class="t rr p u" style="top:496.2px;width:106.5px;left:270px">outBrightnessProfiles.Co...</div>
<div class="a" style="left:269px;top:504.6px;width:109px;height:9.2px;background:#dfdfe7;border-bottom:1px solid #b4c4cc;border-left:1px solid #b4b4b4"></div>
<div class="t rr p u" style="top:505.4px;width:106.5px;left:270px">outBrightnessProfiles.Si...</div>
<div class="a" style="left:269px;top:513.8px;width:109px;height:9.2px;background:#dfdfe7;border-bottom:1px solid #b4c4cc;border-left:1px solid #b4b4b4"></div>
<div class="t rr p u" style="top:514.6px;width:106.5px;left:270px">outResponseProfiles.Count</div>
<svg style="left:256px;top:144.0px" width="12" height="7.2" viewBox="0 0 12 7.2"><ellipse cx="6" cy="3.6" rx="6" ry="3.6" fill="#1f7fcf"/><rect x="5.15" y="2.2" width="1.7" height="3.9" fill="#ffffff"/><rect x="5.15" y="0.7" width="1.7" height="1" fill="#ffffff"/></svg>
<svg style="left:256px;top:153.2px" width="12" height="7.2" viewBox="0 0 12 7.2"><ellipse cx="6" cy="3.6" rx="6" ry="3.6" fill="#1f7fcf"/><rect x="5.15" y="2.2" width="1.7" height="3.9" fill="#ffffff"/><rect x="5.15" y="0.7" width="1.7" height="1" fill="#ffffff"/></svg>
<svg style="left:256px;top:162.39999999999998px" width="12" height="7.2" viewBox="0 0 12 7.2"><ellipse cx="6" cy="3.6" rx="6" ry="3.6" fill="#1f7fcf"/><rect x="5.15" y="2.2" width="1.7" height="3.9" fill="#ffffff"/><rect x="5.15" y="0.7" width="1.7" height="1" fill="#ffffff"/></svg>
<svg style="left:256px;top:208.39999999999998px" width="12" height="7.2" viewBox="0 0 12 7.2"><ellipse cx="6" cy="3.6" rx="6" ry="3.6" fill="#1f7fcf"/><rect x="5.15" y="2.2" width="1.7" height="3.9" fill="#ffffff"/><rect x="5.15" y="0.7" width="1.7" height="1" fill="#ffffff"/></svg>
<svg style="left:256px;top:217.6px" width="12" height="7.2" viewBox="0 0 12 7.2"><ellipse cx="6" cy="3.6" rx="6" ry="3.6" fill="#1f7fcf"/><rect x="5.15" y="2.2" width="1.7" height="3.9" fill="#ffffff"/><rect x="5.15" y="0.7" width="1.7" height="1" fill="#ffffff"/></svg>
<svg style="left:256px;top:226.79999999999998px" width="12" height="7.2" viewBox="0 0 12 7.2"><ellipse cx="6" cy="3.6" rx="6" ry="3.6" fill="#1f7fcf"/><rect x="5.15" y="2.2" width="1.7" height="3.9" fill="#ffffff"/><rect x="5.15" y="0.7" width="1.7" height="1" fill="#ffffff"/></svg>
<svg style="left:256px;top:236.0px" width="12" height="7.2" viewBox="0 0 12 7.2"><ellipse cx="6" cy="3.6" rx="6" ry="3.6" fill="#1f7fcf"/><rect x="5.15" y="2.2" width="1.7" height="3.9" fill="#ffffff"/><rect x="5.15" y="0.7" width="1.7" height="1" fill="#ffffff"/></svg>
<svg style="left:256px;top:245.2px" width="12" height="7.2" viewBox="0 0 12 7.2"><ellipse cx="6" cy="3.6" rx="6" ry="3.6" fill="#1f7fcf"/><rect x="5.15" y="2.2" width="1.7" height="3.9" fill="#ffffff"/><rect x="5.15" y="0.7" width="1.7" height="1" fill="#ffffff"/></svg>
<svg style="left:256px;top:254.4px" width="12" height="7.2" viewBox="0 0 12 7.2"><ellipse cx="6" cy="3.6" rx="6" ry="3.6" fill="#1f7fcf"/><rect x="5.15" y="2.2" width="1.7" height="3.9" fill="#ffffff"/><rect x="5.15" y="0.7" width="1.7" height="1" fill="#ffffff"/></svg>
<svg style="left:256px;top:263.6px" width="12" height="7.2" viewBox="0 0 12 7.2"><ellipse cx="6" cy="3.6" rx="6" ry="3.6" fill="#1f7fcf"/><rect x="5.15" y="2.2" width="1.7" height="3.9" fill="#ffffff"/><rect x="5.15" y="0.7" width="1.7" height="1" fill="#ffffff"/></svg>
<svg style="left:256px;top:272.79999999999995px" width="12" height="7.2" viewBox="0 0 12 7.2"><ellipse cx="6" cy="3.6" rx="6" ry="3.6" fill="#1f7fcf"/><rect x="5.15" y="2.2" width="1.7" height="3.9" fill="#ffffff"/><rect x="5.15" y="0.7" width="1.7" height="1" fill="#ffffff"/></svg>
<svg style="left:256px;top:282.0px" width="12" height="7.2" viewBox="0 0 12 7.2"><ellipse cx="6" cy="3.6" rx="6" ry="3.6" fill="#1f7fcf"/><rect x="5.15" y="2.2" width="1.7" height="3.9" fill="#ffffff"/><rect x="5.15" y="0.7" width="1.7" height="1" fill="#ffffff"/></svg>
<svg style="left:269.5px;top:154.2px" width="3.4" height="5.2" viewBox="0 0 3.4 5.2"><path d="M0 0 A3.4 2.6 0 0 1 0 5.2 Z" fill="#3c3c98"/></svg>
<svg style="left:269.5px;top:172.6px" width="3.4" height="5.2" viewBox="0 0 3.4 5.2"><path d="M0 0 A3.4 2.6 0 0 1 0 5.2 Z" fill="#3c3c98"/></svg>
<svg style="left:269.5px;top:181.79999999999998px" width="3.4" height="5.2" viewBox="0 0 3.4 5.2"><path d="M0 0 A3.4 2.6 0 0 1 0 5.2 Z" fill="#c8ec80"/></svg>
<svg style="left:269.5px;top:191.0px" width="3.4" height="5.2" viewBox="0 0 3.4 5.2"><path d="M0 0 A3.4 2.6 0 0 1 0 5.2 Z" fill="#3c3c98"/></svg>
<svg style="left:269.5px;top:200.2px" width="3.4" height="5.2" viewBox="0 0 3.4 5.2"><path d="M0 0 A3.4 2.6 0 0 1 0 5.2 Z" fill="#3c3c98"/></svg>
<svg style="left:269.5px;top:246.2px" width="3.4" height="5.2" viewBox="0 0 3.4 5.2"><path d="M0 0 A3.4 2.6 0 0 1 0 5.2 Z" fill="#c8ec80"/></svg>
<svg style="left:269.5px;top:264.6px" width="3.4" height="5.2" viewBox="0 0 3.4 5.2"><path d="M0 0 A3.4 2.6 0 0 1 0 5.2 Z" fill="#3c3c98"/></svg>
<svg style="left:269.5px;top:283.0px" width="3.4" height="5.2" viewBox="0 0 3.4 5.2"><path d="M0 0 A3.4 2.6 0 0 1 0 5.2 Z" fill="#3c3c98"/></svg>
<svg style="left:176.6px;top:152.64999999999998px" width="3.4" height="5.2" viewBox="0 0 3.4 5.2"><path d="M3.4 0 A3.4 2.6 0 0 0 3.4 5.2 Z" fill="#3c3c98"/></svg>
<svg style="left:176.6px;top:182.54999999999998px" width="3.4" height="5.2" viewBox="0 0 3.4 5.2"><path d="M3.4 0 A3.4 2.6 0 0 0 3.4 5.2 Z" fill="#3c3c98"/></svg>
<svg style="left:176.6px;top:242.34999999999997px" width="3.4" height="5.2" viewBox="0 0 3.4 5.2"><path d="M3.4 0 A3.4 2.6 0 0 0 3.4 5.2 Z" fill="#3c3c98"/></svg>
<svg style="left:176px;top:63px" width="5" height="6" viewBox="0 0 5 6"><path d="M5,0.5 A3,2.5 0 0 0 5,5.5" stroke="#f07070" stroke-width="1" fill="none"/></svg>
<svg style="left:256px;top:422.8px" width="12" height="7.2" viewBox="0 0 12 7.2"><ellipse cx="6" cy="3.6" rx="6" ry="3.6" fill="#1f7fcf"/><rect x="5.15" y="2.2" width="1.7" height="3.9" fill="#ffffff"/><rect x="5.15" y="0.7" width="1.7" height="1" fill="#ffffff"/></svg>
<svg style="left:256px;top:432.0px" width="12" height="7.2" viewBox="0 0 12 7.2"><ellipse cx="6" cy="3.6" rx="6" ry="3.6" fill="#1f7fcf"/><rect x="5.15" y="2.2" width="1.7" height="3.9" fill="#ffffff"/><rect x="5.15" y="0.7" width="1.7" height="1" fill="#ffffff"/></svg>
<svg style="left:256px;top:487.2px" width="12" height="7.2" viewBox="0 0 12 7.2"><ellipse cx="6" cy="3.6" rx="6" ry="3.6" fill="#1f7fcf"/><rect x="5.15" y="2.2" width="1.7" height="3.9" fill="#ffffff"/><rect x="5.15" y="0.7" width="1.7" height="1" fill="#ffffff"/></svg>
<svg style="left:256px;top:496.4px" width="12" height="7.2" viewBox="0 0 12 7.2"><ellipse cx="6" cy="3.6" rx="6" ry="3.6" fill="#1f7fcf"/><rect x="5.15" y="2.2" width="1.7" height="3.9" fill="#ffffff"/><rect x="5.15" y="0.7" width="1.7" height="1" fill="#ffffff"/></svg>
<svg style="left:256px;top:505.6px" width="12" height="7.2" viewBox="0 0 12 7.2"><ellipse cx="6" cy="3.6" rx="6" ry="3.6" fill="#1f7fcf"/><rect x="5.15" y="2.2" width="1.7" height="3.9" fill="#ffffff"/><rect x="5.15" y="0.7" width="1.7" height="1" fill="#ffffff"/></svg>
<svg style="left:256px;top:514.8px" width="12" height="7.2" viewBox="0 0 12 7.2"><ellipse cx="6" cy="3.6" rx="6" ry="3.6" fill="#1f7fcf"/><rect x="5.15" y="2.2" width="1.7" height="3.9" fill="#ffffff"/><rect x="5.15" y="0.7" width="1.7" height="1" fill="#ffffff"/></svg>
<svg style="left:269.5px;top:433.0px" width="3.4" height="5.2" viewBox="0 0 3.4 5.2"><path d="M0 0 A3.4 2.6 0 0 1 0 5.2 Z" fill="#3a9a3a"/></svg>
<svg style="left:269.5px;top:451.4px" width="3.4" height="5.2" viewBox="0 0 3.4 5.2"><path d="M0 0 A3.4 2.6 0 0 1 0 5.2 Z" fill="#f2eab8"/></svg>
<svg style="left:269.5px;top:460.6px" width="3.4" height="5.2" viewBox="0 0 3.4 5.2"><path d="M0 0 A3.4 2.6 0 0 1 0 5.2 Z" fill="#e04040"/></svg>
<svg style="left:269.5px;top:506.6px" width="3.4" height="5.2" viewBox="0 0 3.4 5.2"><path d="M0 0 A3.4 2.6 0 0 1 0 5.2 Z" fill="#f2eab8"/></svg>
<svg style="left:176.6px;top:422.125px" width="3.4" height="5.2" viewBox="0 0 3.4 5.2"><path d="M3.4 0 A3.4 2.6 0 0 0 3.4 5.2 Z" fill="#3a9a3a"/></svg>
<svg style="left:0;top:0" width="1024" height="518" viewBox="0 0 1024 518"><rect x="211.5" y="162.5" width="25.5" height="16.8" fill="#fff" stroke="#9a9a9a" stroke-width="1"/><path d="M214,176 L214,165 L231,165 Z" fill="#111"/><path d="M216,177.5 L234,166" stroke="#e08a20" stroke-width="1.3"/><path d="M215,176.5 L233,164.5" stroke="#ffffff" stroke-width="0.8"/><ellipse cx="230.5" cy="175.8" rx="6.2" ry="3.8" fill="#1f7fcf" stroke="#cfe8ff" stroke-width="0.6"/><rect x="229.7" y="174" width="1.6" height="4" fill="#e6f4ff"/><rect x="229.7" y="172.6" width="1.6" height="0.9" fill="#e6f4ff"/><path d="M211.5,321 L211.5,306.5 L237.5,306.5 L237.5,321" fill="#fff" stroke="#a8a8a8" stroke-width="0.8"/><path d="M214,310.5 L235,314 L224.5,320 Z" fill="none" stroke="#e88a28" stroke-width="2" stroke-linejoin="miter"/><path d="M213.5,310.5 L224.5,320.5" stroke="#5a3810" stroke-width="1.3"/><rect x="210" y="426.5" width="28.5" height="18" fill="#e8e8e8" stroke="#a8a8a8" stroke-width="0.9" stroke-dasharray="1.2,1.2"/><path d="M214,430 L222,429 L229,434 L227,436 L221,432 L214,432.5 Z" fill="#a4a4a4"/><ellipse cx="230.5" cy="440" rx="6.2" ry="3.8" fill="#1f7fcf" stroke="#cfe8ff" stroke-width="0.6"/><rect x="229.7" y="438.2" width="1.6" height="4" fill="#e6f4ff"/><rect x="229.7" y="436.8" width="1.6" height="0.9" fill="#e6f4ff"/></svg>
<svg style="left:0;top:0" width="30" height="518" viewBox="0 0 30 518"><ellipse cx="16.5" cy="330.3" rx="4.6" ry="3.2" fill="#8a0a0a"/></svg>
<div class="a" style="left:426px;top:32px;width:598px;height:486px;background:#fff;border-left:1px solid #c8c8c8"></div>
<div class="a" style="left:426px;top:32px;width:598px;height:11px;background:#ededed;border-top:1px solid #c4c4c4"></div>
<div class="a" style="left:427px;top:42px;width:597px;height:414px;background:#ecdc94"></div>
<div class="a" style="left:429px;top:45px;width:595px;height:408.5px;background:#111"></div>
<div class="a" style="left:426px;top:456px;width:598px;height:12px;background:#eeeeee;border-bottom:1px solid #c8c8c8"></div>
<svg style="left:0;top:0" width="1024" height="518" viewBox="0 0 1024 518">
<path d="M430,43 L446,33.3 L493,33.3 L493,43 Z" fill="#f6f6f6" stroke="#b4b4b4" stroke-width="0.8"/>
<path d="M493,43 L493,36 L496,33.3 L567,33.3 L567,43 Z" fill="#fbfbfb" stroke="#b4b4b4" stroke-width="0.8"/>
<path d="M493,36 L499,33.6" stroke="#909090" stroke-width="0.7"/>
<path d="M567,43 L567,36 L570,33.3 L622,33.3 L622,43 Z" fill="#f6f6f6" stroke="#b4b4b4" stroke-width="0.8"/>
<path d="M567,36 L573,33.6" stroke="#909090" stroke-width="0.7"/>
<path d="M622,43 L622,36 L625,33.3 L684,33.3 L684,43 Z" fill="#f6f6f6" stroke="#b4b4b4" stroke-width="0.8"/>
<path d="M622,36 L628,33.6" stroke="#909090" stroke-width="0.7"/>
<path d="M684,43 L684,36 L687,33.3 L790,33.3 L790,43 Z" fill="#f6f6f6" stroke="#b4b4b4" stroke-width="0.8"/>
<path d="M684,36 L690,33.6" stroke="#909090" stroke-width="0.7"/>
<path d="M790,43 L790,36 L793,33.3 L835,33.3 L835,43 Z" fill="#f6f6f6" stroke="#b4b4b4" stroke-width="0.8"/>
<path d="M790,36 L796,33.6" stroke="#909090" stroke-width="0.7"/>
</svg>
<div class="t" style="left:443px;top:34.5px;color:#202020;letter-spacing:0.3px">outSegment</div>
<div class="t" style="left:498px;top:34.5px;color:#000;font-size:8.5px;letter-spacing:0.68px"><b>inSurface (+5)</b></div>
<div class="t" style="left:571px;top:34.5px;color:#202020;letter-spacing:0.3px">outSegment</div>
<div class="t" style="left:627px;top:34.5px;color:#202020;letter-spacing:0.3px">outPoints (+1)</div>
<div class="t" style="left:688px;top:34.5px;color:#202020;letter-spacing:0.3px">outSegment1.Length (+9)</div>
<div class="t" style="left:795px;top:34.5px;color:#202020;letter-spacing:0.3px">outImage</div>
<svg style="left:0;top:0" width="1024" height="518" viewBox="0 0 1024 518">
<path d="M431.9,467 L442.1,458.2 L492.6,458.2 L492.6,467 Z" fill="#fbfbfb" stroke="#b0b0b0" stroke-width="0.8"/>
</svg>
<div class="t" style="left:442.5px;top:459px;color:#202020;letter-spacing:0.34px">outDistance</div>
<div class="a" style="left:430px;top:469px;width:77px;height:12px;background:#e6e6e6;border:1px solid #333;border-right-width:1.5px"></div>
<div class="a" style="left:506.5px;top:469px;width:54.5px;height:12px;background:#fafafa;border:1px solid #a8a8a8;border-left:none"></div>
<div class="t" style="left:435px;top:470.5px;color:#222;font-size:10px;letter-spacing:0.75px;line-height:10px">outDistance</div>
<div class="t" style="left:511.5px;top:470.5px;color:#333;font-size:10px;letter-spacing:0.6px;line-height:10px;font-family:&#39;Liberation Mono&#39;,monospace">127.529</div>
<svg style="left:0;top:0" width="1024" height="518" viewBox="0 0 1024 518">
<defs><clipPath id="vc"><rect x="429" y="45" width="595" height="408.5"/></clipPath></defs>
<g clip-path="url(#vc)">
<rect x="432.5" y="46.5" width="111" height="58" fill="#050505"/>
<path d="M596.5,159.2 L437.4,530.3 M631.4,161.2 L483.2,533.9 M666.5,163.3 L529.1,537.5 M701.6,165.3 L575.3,541.1 M736.9,167.3 L621.8,544.8 M772.4,169.4 L668.4,548.4 M808.0,171.5 L715.3,552.1 M843.7,173.5 L762.5,555.8 M879.5,175.6 L809.9,559.5 M587.7,179.6 L912.3,198.8 M578.7,200.8 L909.0,220.7 M569.3,222.7 L905.6,243.4 M559.5,245.5 L902.1,266.9 M549.4,269.1 L898.4,291.4 M538.9,293.6 L894.6,316.9 M527.9,319.1 L890.6,343.3 M516.6,345.6 L886.4,370.9 M504.7,373.2 L882.1,399.6 M492.4,402.0 L877.6,429.5 M479.5,432.0 L872.9,460.7 M466.1,463.3 L868.0,493.4 M452.1,496.1 L862.8,527.5" stroke="#9a9a9a" stroke-width="0.85" fill="none"/>
<path d="M915.5,177.7 L857.5,563.3" stroke="#52a852" stroke-width="0.9" fill="none"/>
<path d="M539.2,155.9 L974.1,181.1" stroke="#9c3c36" stroke-width="1" fill="none"/>
<path d="M562.6,143.7 L539.4,155.4 L561.6,169.7" stroke="#9c3c36" stroke-width="1" fill="none"/>
<rect x="520" y="150" width="10" height="10" fill="#0a0a0a"/><text x="525" y="158" font-size="9" font-weight="bold" fill="#c84848" text-anchor="middle" font-family="Liberation Sans">x</text>
<path d="M915.5,177.7 L926,102.5 M900,113 L926,102.5 L948,116.7" stroke="#6c6cd8" stroke-width="1" fill="none"/>
<rect x="921" y="88" width="10" height="10" fill="#0a0a0a"/><text x="926" y="96" font-size="7" font-weight="bold" fill="#8c8cf0" text-anchor="middle" font-family="Liberation Sans">z</text>
<rect x="555" y="217" width="10" height="10" fill="#0a0a0a"/><text x="560" y="225" font-size="8" font-weight="bold" fill="#f0f0f0" text-anchor="middle" font-family="Liberation Sans">0</text>
<rect x="488" y="340" width="25" height="10" fill="#0a0a0a"/><text x="500.5" y="348" font-size="8" font-weight="bold" fill="#f0f0f0" text-anchor="middle" font-family="Liberation Sans" letter-spacing="0.8">100</text>
<path d="M616,179.8 L860.2,195.3 L861.2,205.8 L627.8,191.2 Z" fill="#a24444" fill-opacity="0.95"/>
<path d="M627.8,191.2 L861.2,205.8" stroke="#c89060" stroke-width="1.6"/>
<defs><linearGradient id="pg" x1="0" y1="0" x2="1" y2="1"><stop offset="0" stop-color="#00ff50"/><stop offset="1" stop-color="#00ff66"/></linearGradient></defs>
<path d="M628.5,192.5 L861.2,207 L816.2,433.5 L534.5,413 Z M626.0,228 A30.5,15.8 0 1 0 687.0,228 A30.5,15.8 0 1 0 626.0,228 Z M566.0,370.5 A34.5,17.5 0 1 0 635.0,370.5 A34.5,17.5 0 1 0 566.0,370.5 Z" fill="url(#pg)" fill-rule="evenodd"/>
<defs><linearGradient id="le" gradientUnits="userSpaceOnUse" x1="628" y1="192" x2="534" y2="413"><stop offset="0" stop-color="#40f0c0"/><stop offset="0.6" stop-color="#70a0ff"/><stop offset="1" stop-color="#b080ff"/></linearGradient></defs>
<path d="M628.5,192.5 L534.5,413" stroke="url(#le)" stroke-width="1.4" stroke-opacity="0.85"/>
<path d="M861.2,207 L816.2,433.5" stroke="#90fff0" stroke-width="1.6"/>
<path d="M812,426 L816,433 L822,428" stroke="#a0ffff" stroke-width="1.5" fill="none"/>
<path d="M626.0,228 A30.5,15.8 0 1 0 687.0,228 A30.5,15.8 0 1 0 626.0,228 Z" stroke="#000" stroke-width="2.4" fill="none"/>
<path d="M625.5,228.3 A30,15.6 0 1 0 685.5,228.3 A30,15.6 0 1 0 625.5,228.3 Z" stroke="#e09a20" stroke-width="1.2" fill="none"/>
<path d="M672,215.5 A30.5,15.8 0 0 1 684,236" stroke="#000" stroke-width="1.6" fill="none"/>
<path d="M641,236.3 Q656,239 668,235.5" stroke="#ff2a90" stroke-width="1.7" fill="none"/>
<path d="M642,238.8 Q656,242 671,238" stroke="#e8d030" stroke-width="1.1" fill="none"/>
<path d="M644,241 Q656,243.5 668,241" stroke="#30e0c0" stroke-width="0.8" fill="none"/>
<path d="M566.0,370.5 A34.5,17.5 0 1 0 635.0,370.5 A34.5,17.5 0 1 0 566.0,370.5 Z" stroke="#000" stroke-width="2.4" fill="none"/>
<path d="M570,378 A34.5,17.5 0 0 1 600,353.2" stroke="#2a9a30" stroke-width="1.2" fill="none"/>
<path d="M600,353.2 A34.5,17.5 0 0 1 634,372" stroke="#e09a20" stroke-width="1.1" fill="none"/>
<path d="M572,383 Q600,389 625,383" stroke="#e09a20" stroke-width="1.1" fill="none"/>
<path d="M586,382 Q602,385 616,381" stroke="#ff2a90" stroke-width="1.7" fill="none"/>
<path d="M576,385 Q600,390 626,384.5" stroke="#e8d030" stroke-width="0.9" fill="none"/>
<path d="M869,249.5 L877,249.5 M876.5,246 L876.5,253" stroke="#c04040" stroke-width="0.9" fill="none"/>
<ellipse cx="675" cy="204" rx="2" ry="1.3" fill="#103030"/>
<ellipse cx="656" cy="253" rx="2" ry="1.3" fill="#103030"/>
<ellipse cx="622" cy="343" rx="2" ry="1.3" fill="#103030"/>
<ellipse cx="599" cy="404" rx="2" ry="1.3" fill="#103030"/>
</g></svg>
<div class="t" style="left:435.5px;top:48.8px;color:#b4e8b4;font-size:7.5px;letter-spacing:0.75px;-webkit-text-stroke:0.05px #a0d8a0">inSurface</div>
<div class="t" style="left:435.5px;top:58.0px;color:#b4e8b4;font-size:7.5px;letter-spacing:0.75px;-webkit-text-stroke:0.05px #a0d8a0">outCircle</div>
<div class="a" style="left:536.5px;top:60.0px;width:4px;height:5px;background:#f0a060"></div>
<div class="t" style="left:435.5px;top:67.2px;color:#b4e8b4;font-size:7.5px;letter-spacing:0.75px;-webkit-text-stroke:0.05px #a0d8a0">Circle</div>
<div class="a" style="left:536.5px;top:69.2px;width:4px;height:5px;background:#30c040"></div>
<div class="t" style="left:435.5px;top:76.4px;color:#b4e8b4;font-size:7.5px;letter-spacing:0.75px;-webkit-text-stroke:0.05px #a0d8a0">outSegment</div>
<div class="a" style="left:536.5px;top:78.4px;width:4px;height:5px;background:#c070e0"></div>
<div class="t" style="left:435.5px;top:85.6px;color:#b4e8b4;font-size:7.5px;letter-spacing:0.75px;-webkit-text-stroke:0.05px #a0d8a0">outSegment</div>
<div class="a" style="left:536.5px;top:87.6px;width:4px;height:5px;background:#a0f0ff"></div>
<div class="t" style="left:435.5px;top:94.8px;color:#b4e8b4;font-size:7.5px;letter-spacing:0.75px;-webkit-text-stroke:0.05px #a0d8a0">outConnectingSegment</div>
<div class="a" style="left:536.5px;top:96.8px;width:4px;height:5px;background:#f07070"></div>
</body></html>
